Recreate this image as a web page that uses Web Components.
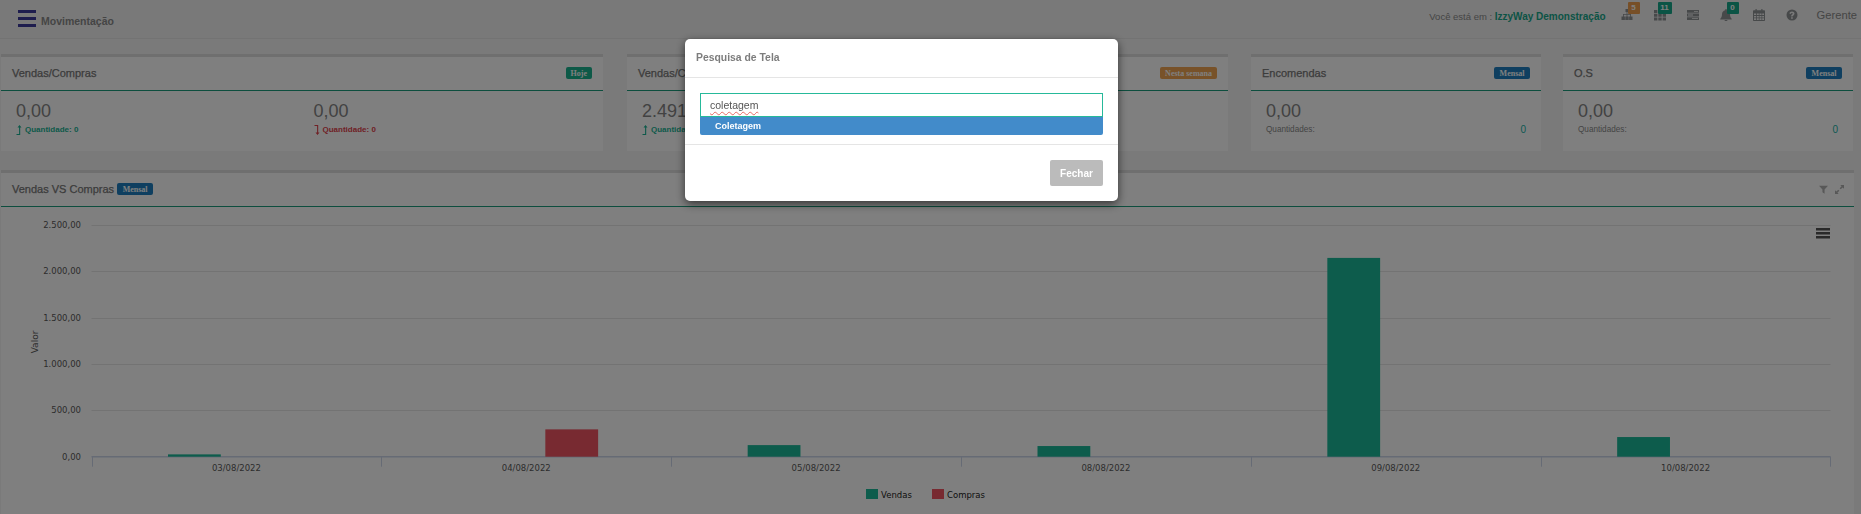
<!DOCTYPE html>
<html lang="pt-BR">
<head>
<meta charset="utf-8">
<title>Movimentação</title>
<style>
  html, body { margin: 0; padding: 0; height: 100%; overflow: hidden; }
  body { background: #f4f4f4; font-family: "Liberation Sans", Arial, sans-serif; }
</style>
</head>
<body>
<app-page>
  <top-bar slot="top" title-text="Movimentação" company="IzzyWay Demonstração" user="Gerente"></top-bar>
  <stat-card slot="cards" style="width:602px" heading="Vendas/Compras" badge="Hoje" tone="green" in-value="0,00" in-qty="0" out-value="0,00" out-qty="0"></stat-card>
  <stat-card slot="cards" style="width:601px;margin-left:1px" heading="Vendas/Compras" badge="Nesta semana" tone="orange" in-value="2.491,00" in-qty="3" out-value="0,00" out-qty="0"></stat-card>
  <stat-card slot="cards" style="width:290px" heading="Encomendas" badge="Mensal" tone="blue" value="0,00" count="0"></stat-card>
  <stat-card slot="cards" style="width:290px;margin-left:-1px" heading="O.S" badge="Mensal" tone="blue" value="0,00" count="0"></stat-card>
  <chart-panel slot="chart" heading="Vendas VS Compras" badge="Mensal"></chart-panel>
</app-page>
<search-modal heading="Pesquisa de Tela" query="coletagem" result="Coletagem" action="Fechar"></search-modal>

<script>
// icones desenhados a mao, viewBox 12x12
const ICONS = {
  sitemap: '<path d="M4.500 0h3v3h-3zM5.600 3h.8v2H10v2.400h-.8V5.800H6.400v1.600h-.8V5.800H2.800v1.600H2V5H5.600zM.5 7.500h3.400V11H.5zM4.300 7.500h3.400V11H4.300zM8.100 7.500h3.400V11H8.100z"/>',
  th: '<path d="M0 1h3.400v3H0zM4.300 1h3.400v3H4.300zM8.600 1H12v3H8.600zM0 4.700h3.400v3H0zM4.300 4.700h3.400v3H4.300zM8.600 4.700H12v3H8.600zM0 8.400h3.400v3H0zM4.300 8.400h3.400v3H4.300zM8.600 8.400H12v3H8.600z"/>',
  server: '<path fill-rule="evenodd" d="M0 1h12v2.800H0zM7 2v.8h4V2zM0 4.600h12v2.800H0zM1 5.600v.8h5v-.8zM0 8.200h12V11H0zM5 9.200v.8h6v-.8z"/>',
  bell: '<path d="M6 0c.5 0 .8.300.8.800v.5c2 .4 3.200 2 3.200 4 0 2.200.7 3.500 1.700 4.400v.8H.3v-.8C1.300 8.800 2 7.500 2 5.300c0-2 1.200-3.600 3.200-4V.8C5.200.3 5.500 0 6 0zM4.500 11h3c0 .8-.7 1-1.500 1s-1.500-.2-1.500-1z"/>',
  calendar: '<path fill-rule="evenodd" d="M2.500 0h1.200v1.200h4.600V0h1.200v1.200H11c.6 0 1 .4 1 1V11c0 .6-.4 1-1 1H1c-.6 0-1-.4-1-1V2.200c0-.6.4-1 1-1h1.500zM1 4.500v1.600h2V4.500zM3.800 4.500v1.600h2V4.500zM6.500 4.500v1.600h2V4.500zM9.200 4.500v1.600H11V4.500zM1 6.900v1.600h2V6.900zM3.800 6.900v1.600h2V6.900zM6.500 6.900v1.600h2V6.900zM9.200 6.900v1.600H11V6.900zM1 9.300V11h2V9.300zM3.800 9.300V11h2V9.300zM6.500 9.300V11h2V9.300zM9.200 9.300V11H11V9.300z"/>',
  question: '<path fill-rule="evenodd" d="M6 .5a5.500 5.500 0 1 1 0 11 5.500 5.500 0 0 1 0-11zM5.100 8.200v1.500h1.700V8.200zM6 2.500c-1.400 0-2.300.7-2.600 1.900l1.400.5c.2-.6.500-1 1.100-1 .5 0 .9.300.9.700 0 .4-.3.600-.8 1-.6.400-.9.900-.9 1.600v.3h1.600v-.2c0-.3.200-.5.700-.9.600-.5 1.100-1 1.100-1.900 0-1.200-1.100-2-2.500-2z"/>',
  filter: '<path d="M0 1h12L7.400 6v5.500L4.600 9.600V6z"/>',
  expand: '<path d="M7 0h5v5l-1.800-1.800-2.600 2.600-1.400-1.400 2.600-2.600zM5 12H0V7l1.800 1.800 2.600-2.600 1.400 1.400-2.600 2.600z"/>'
};

class StatusBadge extends HTMLElement {
  constructor() {
    super();
    const shadow = this.attachShadow({ mode: 'open' });
    shadow.innerHTML = `
      <style>
        :host {
          display: inline-flex; align-items: center; justify-content: center;
          height: 12px; padding: 0 4px; border-radius: 2px;
          font: bold 8px "Liberation Serif", "Times New Roman", serif;
          color: #fff; background: #1f7fc4;
        }
        :host([tone="green"]) { background: #1bb38f; padding: 0 5px; }
        :host([tone="orange"]) { background: #f0a552; padding: 0 5px; }
        :host([tone="blue"]) { background: #1e7fc0; padding: 0 5.500px; }
      </style>
      <slot></slot>`;
  }
}
customElements.define('status-badge', StatusBadge);

class NavIcon extends HTMLElement {
  constructor() {
    super();
    const shadow = this.attachShadow({ mode: 'open' });
    const name = this.getAttribute('icon');
    const count = this.getAttribute('count');
    shadow.innerHTML = `
      <style>
        :host { display: block; position: relative; width: 33px; height: 38px; box-sizing: border-box; padding-top: 9px; color: #8f9295; }
        svg { display: block; width: 12px; height: 12px; fill: currentColor; }
        .count {
          position: absolute; top: 2px; left: 7px; min-width: 12px; height: 12px; padding: 0 1px; box-sizing: border-box;
          font: bold 8px/12px "Liberation Sans", sans-serif; text-align: center; color: #fff;
          background: #17a88b; border-radius: 1px;
        }
        :host([tone="orange"]) .count { background: #ee9f4f; }
        :host([wide]) .count { left: 4px; width: 14px; }
      </style>
      <svg viewBox="0 0 12 12">${ICONS[name]}</svg>
      ${count !== null ? `<span class="count">${count}</span>` : ''}`;
  }
}
customElements.define('nav-icon', NavIcon);

class TopBar extends HTMLElement {
  constructor() {
    super();
    const shadow = this.attachShadow({ mode: 'open' });
    shadow.innerHTML = `
      <style>
        :host {
          display: flex; align-items: flex-start; height: 38px; background: #f2f2f2;
          border-bottom: 1px solid #e6e6e6; color: #8b8b8b; font-size: 11px;
        }
        .burger { width: 18px; margin: 10px 5px 0 18px; display: flex; flex-direction: column; gap: 4px; }
        .burger i { display: block; height: 3px; background: #3d3a9c; }
        h1 { margin: 15px 0 0; font-size: 10.500px; font-weight: bold; color: #8a8a8a; line-height: 13px; }
        .right { margin-left: auto; display: flex; align-items: flex-start; padding-right: 4px; }
        .where { margin: 9.500px 15px 0 0; line-height: 13px; font-size: 9.500px; }
        .where b { color: #17a88b; font-size: 10px; }
        .user { margin: 8.500px 0 0 -2px; font-size: 11.200px; line-height: 13px; }
      </style>
      <div class="burger"><i></i><i></i><i></i></div>
      <h1>${this.getAttribute('title-text')}</h1>
      <div class="right">
        <span class="where">Você está em : <b>${this.getAttribute('company')}</b></span>
        <nav-icon icon="sitemap" count="5" tone="orange"></nav-icon>
        <nav-icon icon="th" count="11" wide></nav-icon>
        <nav-icon icon="server"></nav-icon>
        <nav-icon icon="bell" count="0"></nav-icon>
        <nav-icon icon="calendar"></nav-icon>
        <nav-icon icon="question"></nav-icon>
        <span class="user">${this.getAttribute('user')}</span>
      </div>`;
  }
}
customElements.define('top-bar', TopBar);

class StatCard extends HTMLElement {
  constructor() {
    super();
    const shadow = this.attachShadow({ mode: 'open' });
    const a = (n) => this.getAttribute(n);
    const up = '<svg class="arrow" viewBox="0 0 6 10"><path d="M3.500 0l2 2.400H4.200V10H.5V9h2.600V2.400H1.500z"/></svg>';
    const down = '<svg class="arrow" viewBox="0 0 6 10"><path d="M3.500 10l-2-2.400h1.600V1H.5V0h3.700v7.600h1.300z"/></svg>';
    let body;
    if (a('value') === null) {
      body = `
        <div class="cols">
          <div><div class="value">${a('in-value')}</div><div class="qty in">${up}Quantidade: ${a('in-qty')}</div></div>
          <div><div class="value">${a('out-value')}</div><div class="qty out">${down}Quantidade: ${a('out-qty')}</div></div>
        </div>`;
    } else {
      body = `
        <div class="value">${a('value')}</div>
        <div class="line"><span>Quantidades:</span><b>${a('count')}</b></div>`;
    }
    shadow.innerHTML = `
      <style>
        :host { display: block; height: 97px; box-sizing: border-box; border-top: 3px solid #dfdfdf; background: #fff; flex: none; }
        header {
          height: 34px; box-sizing: border-box; border-bottom: 1px solid #1a9c7c;
          display: flex; align-items: center; justify-content: space-between; padding: 0 11px 1px;
        }
        h2 { margin: 0; font-size: 11px; font-weight: normal; color: #787878; -webkit-text-stroke: .25px #787878; }
        .body { padding: 10px 15px 0; }
        .cols { display: grid; grid-template-columns: 297.500px 1fr; }
        .value { font-size: 18px; line-height: 21px; color: #858585; }
        .qty { display: flex; align-items: center; font: bold 8px/10px "Liberation Sans", sans-serif; margin-top: 3px; }
        .arrow { width: 6px; height: 10px; fill: currentColor; margin-right: 3px; }
        .in { color: #1ab394; }
        .out { color: #e0424c; }
        .line { display: flex; justify-content: space-between; align-items: center; margin-top: 3px; font-size: 8.200px; line-height: 10px; color: #8a8a8a; }
        .line b { font-size: 10px; font-weight: normal; color: #1ab3a6; }
      </style>
      <header><h2>${a('heading')}</h2><status-badge tone="${a('tone')}">${a('badge')}</status-badge></header>
      <div class="body">${body}</div>`;
  }
}
customElements.define('stat-card', StatCard);

class BarChart extends HTMLElement {
  constructor() {
    super();
    const shadow = this.attachShadow({ mode: 'open' });
    // coordenadas relativas ao elemento, que comeca em y=207 na pagina
    const zero = 456.700 - 207, step = (456.700 - 225) / 5;
    const left = 90.500, right = 1829.500, band = (right - left) / 6;
    const data = [
      ['03/08/2022', 25, 0], ['04/08/2022', 0, 295], ['05/08/2022', 125, 0],
      ['08/08/2022', 115, 0], ['09/08/2022', 2145, 0], ['10/08/2022', 212, 0]
    ];
    const perUnit = step / 500;
    let grid = '', yLabels = '', ticks = '', bars = '', xLabels = '';
    ['0,00', '500,00', '1.000,00', '1.500,00', '2.000,00', '2.500,00'].forEach((t, i) => {
      const y = Math.round(zero - i * step) + .5;
      if (i) grid += `<path class="grid" d="M${left} ${y}H${right}"/>`;
      yLabels += `<text class="lbl" x="80" y="${y + 2}" text-anchor="end">${t}</text>`;
    });
    data.forEach((d, i) => {
      const x0 = left + i * band;
      ticks += `<path class="axis" d="M${Math.round(x0) + .5} ${zero}v10"/>`;
      xLabels += `<text class="lbl" x="${x0 + band / 2}" y="${zero + 14.500}" text-anchor="middle">${d[0]}</text>`;
      if (d[1]) bars += `<rect class="v" x="${x0 + 76.500}" y="${zero - d[1] * perUnit}" width="52.800" height="${d[1] * perUnit}"/>`;
      if (d[2]) bars += `<rect class="c" x="${x0 + 164}" y="${zero - d[2] * perUnit}" width="52.800" height="${d[2] * perUnit}"/>`;
    });
    ticks += `<path class="axis" d="M${right} ${zero}v10"/>`;
    shadow.innerHTML = `
      <style>
        :host { display: block; height: 307px; }
        svg { display: block; width: 1852px; height: 307px; }
        .grid { stroke: #e6e6e6; stroke-width: 1; fill: none; }
        .axis { stroke: #ccd6eb; stroke-width: 1; fill: none; }
        .base { stroke: #ccd6eb; stroke-width: 1.500; fill: none; }
        .lbl { font: 8.500px "DejaVu Sans", Verdana, sans-serif; fill: #5a5a5a; }
        .ttl { font: 9px "DejaVu Sans", Verdana, sans-serif; fill: #5a5a5a; }
        .lg { font: 8.500px "DejaVu Sans", Verdana, sans-serif; fill: #222; }
        .v { fill: #1ab898; }
        .c { fill: #f05462; }
        .menu { fill: #555; }
      </style>
      <svg viewBox="0 0 1852 307">
        ${grid}
        <path class="base" d="M${left} ${zero}H${right}"/>
        ${ticks}
        ${yLabels}
        ${xLabels}
        ${bars}
        <text class="ttl" transform="translate(37 135) rotate(-90)" text-anchor="middle">Valor</text>
        <path class="menu" d="M1815 21h14v2.500h-14zM1815 25h14v2.500h-14zM1815 29h14v2.500h-14z"/>
        <rect class="v" x="865" y="282" width="12" height="10"/>
        <text class="lg" x="880" y="290.500">Vendas</text>
        <rect class="c" x="931" y="282" width="12" height="10"/>
        <text class="lg" x="946" y="290.500">Compras</text>
      </svg>`;
  }
}
customElements.define('bar-chart', BarChart);

class ChartPanel extends HTMLElement {
  constructor() {
    super();
    const shadow = this.attachShadow({ mode: 'open' });
    shadow.innerHTML = `
      <style>
        :host { display: block; width: 1853px; box-sizing: border-box; border-top: 3px solid #dfdfdf; background: #fff; }
        header {
          height: 34px; box-sizing: border-box; border-bottom: 1px solid #1a9c7c;
          display: flex; align-items: center; gap: 3px; padding: 0 11px 1px;
        }
        h2 { margin: 0; font-size: 11px; font-weight: normal; color: #787878; -webkit-text-stroke: .25px #787878; }
        .tools { margin-left: auto; display: flex; gap: 7px; color: #b0b0b0; margin-right: -1px; }
        .tools svg { width: 9px; height: 9px; fill: currentColor; display: block; }
      </style>
      <header>
        <h2>${this.getAttribute('heading')}</h2>
        <status-badge tone="blue">${this.getAttribute('badge')}</status-badge>
        <div class="tools">
          <svg viewBox="0 0 12 12">${ICONS.filter}</svg>
          <svg viewBox="0 0 12 12">${ICONS.expand}</svg>
        </div>
      </header>
      <bar-chart></bar-chart>`;
  }
}
customElements.define('chart-panel', ChartPanel);

class AppPage extends HTMLElement {
  constructor() {
    super();
    const shadow = this.attachShadow({ mode: 'open' });
    shadow.innerHTML = `
      <style>
        :host { display: block; height: 514px; overflow: hidden; background: #f4f4f4; }
        .cards { display: flex; gap: 23px; padding: 15px 0 19px 1px; }
        .chart { padding-left: 1px; }
      </style>
      <slot name="top"></slot>
      <div class="cards"><slot name="cards"></slot></div>
      <div class="chart"><slot name="chart"></slot></div>`;
  }
}
customElements.define('app-page', AppPage);

class SearchModal extends HTMLElement {
  constructor() {
    super();
    const shadow = this.attachShadow({ mode: 'open' });
    const a = (n) => this.getAttribute(n);
    shadow.innerHTML = `
      <style>
        :host {
          position: fixed; inset: 0; display: block; background: rgba(0, 0, 0, .5);
          padding-top: 39px; box-sizing: border-box; font-family: "Liberation Sans", Arial, sans-serif;
        }
        .dialog {
          width: 433px; height: 162px; margin-left: 685px; box-sizing: border-box; background: #fff;
          border-radius: 5px; box-shadow: 0 3px 10px rgba(0, 0, 0, .6); display: flex; flex-direction: column;
        }
        header { height: 39px; flex: none; box-sizing: border-box; border-bottom: 1px solid #e5e5e5; display: flex; align-items: center; padding: 0 11px 2px; }
        h3 { margin: 0; font-size: 10.400px; font-weight: bold; color: #7d7d7d; }
        .body { height: 67px; flex: none; box-sizing: border-box; padding: 15px 15px 0; border-bottom: 1px solid #e5e5e5; }
        .field {
          height: 24px; box-sizing: border-box; border: 1px solid #26b99a; padding: 0 9px;
          display: flex; align-items: center; font-size: 10.500px; color: #555; background: #fff;
        }
        .field span { text-decoration: underline wavy rgba(224, 52, 44, .7) 1px; text-underline-offset: 2px; }
        .option {
          height: 18px; background: #428bca; color: #fff; font-size: 9px; font-weight: bold;
          display: flex; align-items: center; padding-left: 15px; border-radius: 0 0 2px 2px;
        }
        footer { flex: 1; display: flex; justify-content: flex-end; padding: 15px 15px 0; }
        button {
          width: 53px; height: 26px; border: 0; border-radius: 2px; background: #bbb; color: #fff;
          font: bold 10px "Liberation Sans", Arial, sans-serif; padding: 0;
        }
      </style>
      <div class="dialog">
        <header><h3>${a('heading')}</h3></header>
        <div class="body">
          <div class="field"><span>${a('query')}</span></div>
          <div class="option">${a('result')}</div>
        </div>
        <footer><button>${a('action')}</button></footer>
      </div>`;
  }
}
customElements.define('search-modal', SearchModal);
</script>
</body>
</html>
